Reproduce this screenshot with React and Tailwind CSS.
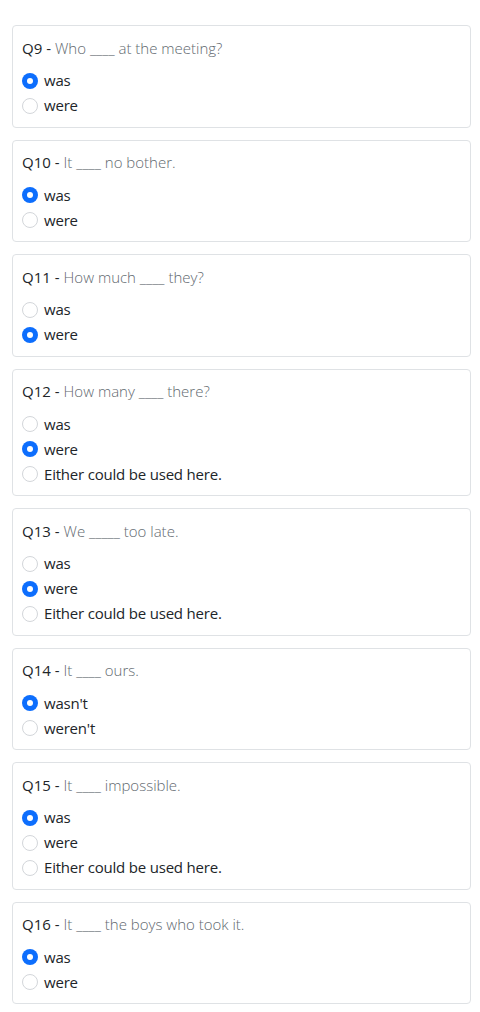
import React from 'react';

const questions = [
  { id: 9, text: 'Who ____ at the meeting?', options: ['was', 'were'], selected: 0 },
  { id: 10, text: 'It ____ no bother.', options: ['was', 'were'], selected: 0 },
  { id: 11, text: 'How much ____ they?', options: ['was', 'were'], selected: 1 },
  { id: 12, text: 'How many ____ there?', options: ['was', 'were', 'Either could be used here.'], selected: 1 },
  { id: 13, text: 'We _____ too late.', options: ['was', 'were', 'Either could be used here.'], selected: 1 },
  { id: 14, text: 'It ____ ours.', options: ["wasn't", "weren't"], selected: 0 },
  { id: 15, text: 'It ____ impossible.', options: ['was', 'were', 'Either could be used here.'], selected: 0 },
  { id: 16, text: 'It ____ the boys who took it.', options: ['was', 'were'], selected: 0 },
];

function Radio({ checked }) {
  if (checked) {
    return (
      <span className="w-4 h-4 rounded-full bg-[#0d6efd] flex items-center justify-center shrink-0">
        <span className="w-[6px] h-[6px] rounded-full bg-white"></span>
      </span>
    );
  }
  return <span className="w-4 h-4 rounded-full border border-[#d3d6da] bg-white shrink-0"></span>;
}

function QuestionCard({ q }) {
  return (
    <div className="border border-[#dfe2e5] rounded-[4px] bg-white px-[9px] pt-[11px] pb-[8.5px]">
      <div className="h-[22px] flex items-center text-[15px] mb-[9px]">
        <span className="text-[#212529]">Q{q.id} - </span>
        <span className="text-[#62696f] font-light ml-1">{q.text}</span>
      </div>
      <div>
        {q.options.map((opt, i) => (
          <div key={i} className="h-[25px] flex items-center">
            <Radio checked={i === q.selected} />
            <span className="ml-[6px] text-[15px] tracking-[-0.2px] text-[#212529]">{opt}</span>
          </div>
        ))}
      </div>
    </div>
  );
}

export default function App() {
  return (
    <div className="bg-white min-h-screen pt-[25px] pl-3 pr-[9px] flex flex-col gap-3" style={{ fontFamily: '"Open Sans", "Noto Sans", sans-serif' }}>
      {questions.map((q) => (
        <QuestionCard key={q.id} q={q} />
      ))}
    </div>
  );
}
